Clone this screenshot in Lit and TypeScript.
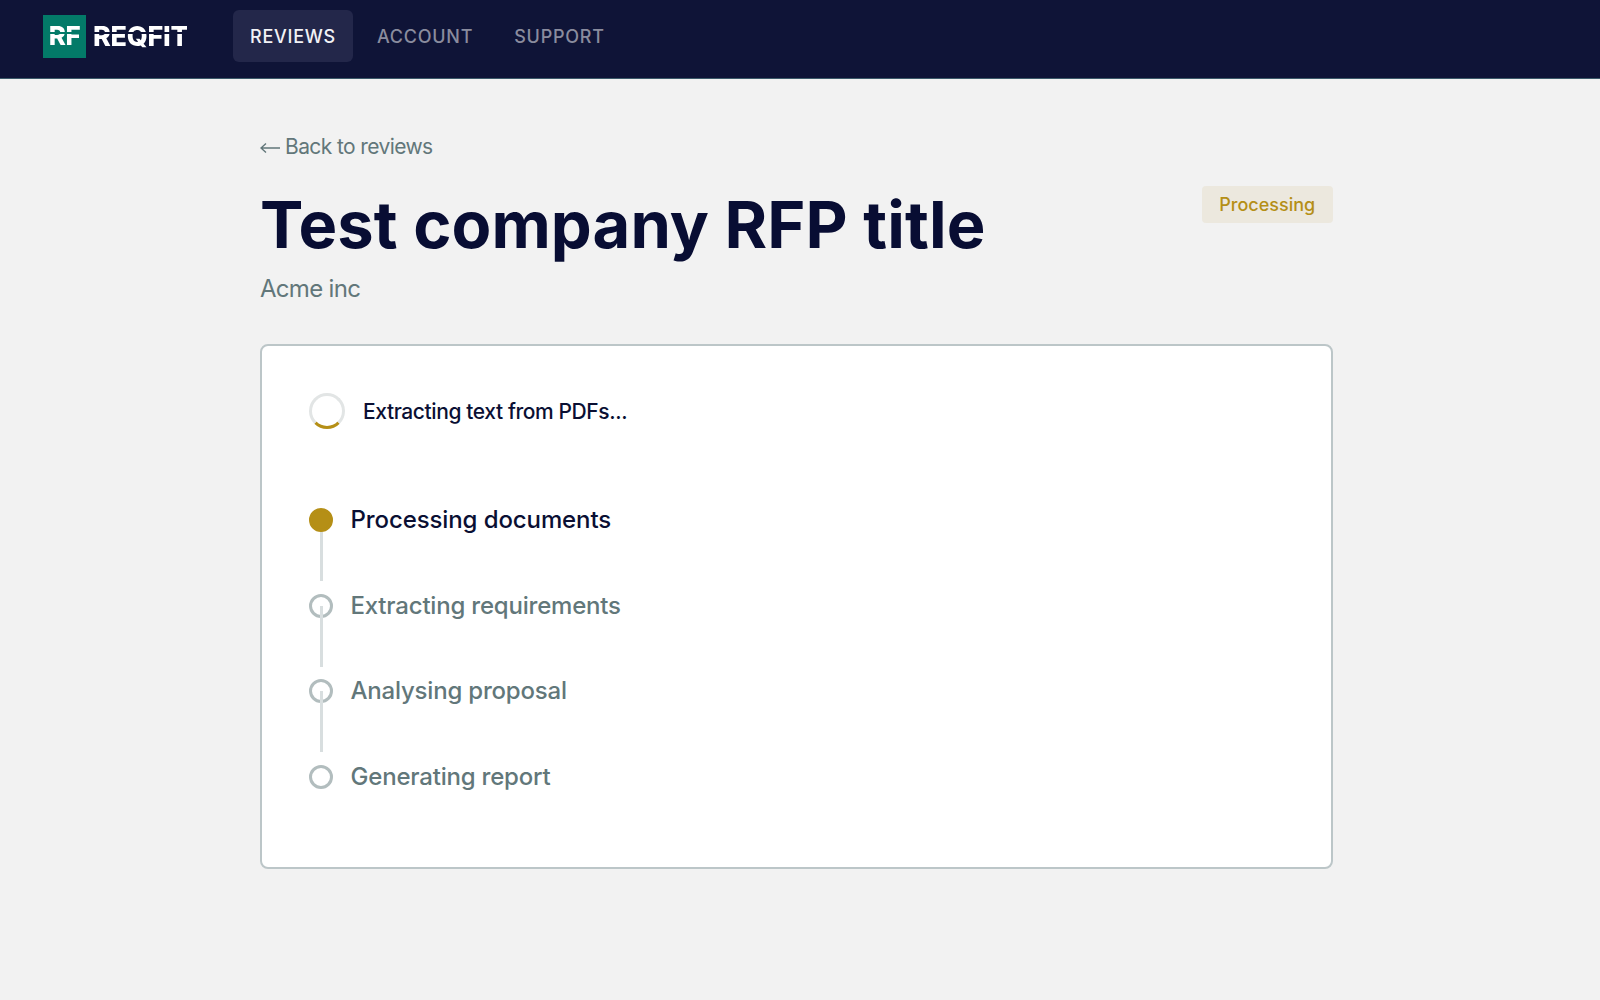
import { LitElement, html, css } from "lit";
import { customElement } from "lit/decorators.js";

const STEPS = [
  { label: "Processing documents", active: true },
  { label: "Extracting requirements", active: false },
  { label: "Analysing proposal", active: false },
  { label: "Generating report", active: false },
];

@customElement("app-root")
export class AppRoot extends LitElement {
  static styles = css`
    :host {
      display: block;
      min-height: 1000px;
      background: #f2f2f2;
      font-family: Inter, "Liberation Sans", sans-serif;
      color: #0a0f33;
    }

    .nav {
      background: #0f1437;
      border-bottom: 1px solid #3c5a6a;
      display: flex;
      align-items: center;
      padding: 0 0 6px 43px;
      box-sizing: border-box;
      height: 79px;
    }

    .brand {
      display: flex;
      align-items: center;
      gap: 7px;
      margin-right: 46px;
    }

    .mark {
      width: 43px;
      height: 43px;
      background: #037a68;
      display: flex;
      align-items: center;
      justify-content: center;
    }

    /* stencil cut through the letters, the text stays real text */
    .mark span,
    .word {
      font-weight: 800;
      line-height: 1;
      white-space: nowrap;
      color: transparent;
      -webkit-background-clip: text;
      background-clip: text;
      background-image: linear-gradient(
        #fff 0,
        #fff 9.5px,
        transparent 9.5px,
        transparent 11px,
        #fff 11px
      );
    }

    .mark span {
      font-size: 26px;
      letter-spacing: -0.5px;
    }

    .word {
      width: 94px;
      font-size: 27px;
      letter-spacing: -0.3px;
    }

    .links {
      display: flex;
      gap: 7px;
    }

    .link {
      height: 52px;
      padding: 0 17px;
      display: flex;
      align-items: center;
      border-radius: 6px;
      font-size: 18px;
      font-weight: 500;
      letter-spacing: 0.75px;
      color: #8a8c9e;
    }

    .link.on {
      background: #23274a;
      color: #f2f2f6;
    }

    .main {
      width: 1073px;
      margin-left: 260px;
      padding-top: 53.5px;
    }

    .back {
      display: flex;
      align-items: center;
      gap: 5px;
      font-size: 21px;
      line-height: 28px;
      color: #62777a;
      letter-spacing: -0.6px;
    }

    .back svg {
      flex: none;
      margin-top: 3px;
    }

    .head {
      display: flex;
      justify-content: space-between;
      align-items: flex-start;
      margin-top: 26.5px;
    }

    h1 {
      margin: 0;
      font-size: 65px;
      line-height: 76px;
      font-weight: 700;
      letter-spacing: 0.1px;
      color: #080d33;
    }

    .badge {
      margin-top: -1px;
      width: 131.5px;
      height: 37px;
      border-radius: 4px;
      background: #ece8de;
      color: #b58f16;
      font-size: 18px;
      font-weight: 500;
      display: flex;
      align-items: center;
      justify-content: center;
    }

    .client {
      font-size: 24px;
      line-height: 32px;
      color: #62777a;
      letter-spacing: -0.7px;
      margin-top: 10px;
    }

    .card {
      margin-top: 39px;
      height: 525px;
      box-sizing: border-box;
      background: #fff;
      border: 2px solid #bcc6c8;
      border-radius: 8px;
      padding: 47px 47px;
    }

    .status {
      display: flex;
      align-items: center;
      gap: 18px;
      font-size: 21px;
      font-weight: 500;
      letter-spacing: -0.4px;
    }

    .spinner {
      width: 36px;
      height: 36px;
      box-sizing: border-box;
      border-radius: 50%;
      border: 3px solid #e2e5e5;
      border-bottom-color: #b58f16;
    }

    .steps {
      margin-top: 79px;
      display: flex;
      flex-direction: column;
    }

    .step {
      position: relative;
      height: 85.7px;
      display: flex;
      align-items: flex-start;
      gap: 17.5px;
      font-size: 24px;
      line-height: 24px;
      font-weight: 450;
      color: #62777a;
      letter-spacing: -0.2px;
    }

    .step.on {
      color: #0a0f33;
      font-weight: 550;
      letter-spacing: -0.1px;
    }

    .dot {
      width: 24px;
      height: 24px;
      box-sizing: border-box;
      border-radius: 50%;
      border: 3px solid #b2bdbe;
      flex: none;
    }

    .step.on .dot {
      position: relative;
      z-index: 1;
      background: #b58f16;
      border-color: #b58f16;
    }

    .line {
      position: absolute;
      left: 10.5px;
      top: 12px;
      width: 3px;
      height: 61px;
      background: #d8dedf;
    }
  `;

  render() {
    return html`
      <div class="nav">
        <div class="brand">
          <div class="mark"><span>RF</span></div>
          <div class="word">REQFIT</div>
        </div>
        <div class="links">
          <div class="link on">REVIEWS</div>
          <div class="link">ACCOUNT</div>
          <div class="link">SUPPORT</div>
        </div>
      </div>
      <div class="main">
        <div class="back">
          <svg width="20" height="12" viewBox="0 0 20 12" fill="none" stroke="currentColor" stroke-width="1.4">
            <path d="M20 6H1M6 1.5L1 6l5 4.5" />
          </svg>
          <span>Back to reviews</span>
        </div>
        <div class="head">
          <h1>Test company RFP title</h1>
          <div class="badge">Processing</div>
        </div>
        <div class="client">Acme inc</div>
        <div class="card">
          <div class="status">
            <div class="spinner"></div>
            <span>Extracting text from PDFs...</span>
          </div>
          <div class="steps">
            ${STEPS.map(
              (s, i) => html`
                <div class="step ${s.active ? "on" : ""}">
                  ${i < STEPS.length - 1 ? html`<div class="line"></div>` : ""}
                  <div class="dot"></div>
                  <span>${s.label}</span>
                </div>
              `
            )}
          </div>
        </div>
      </div>
    `;
  }
}
